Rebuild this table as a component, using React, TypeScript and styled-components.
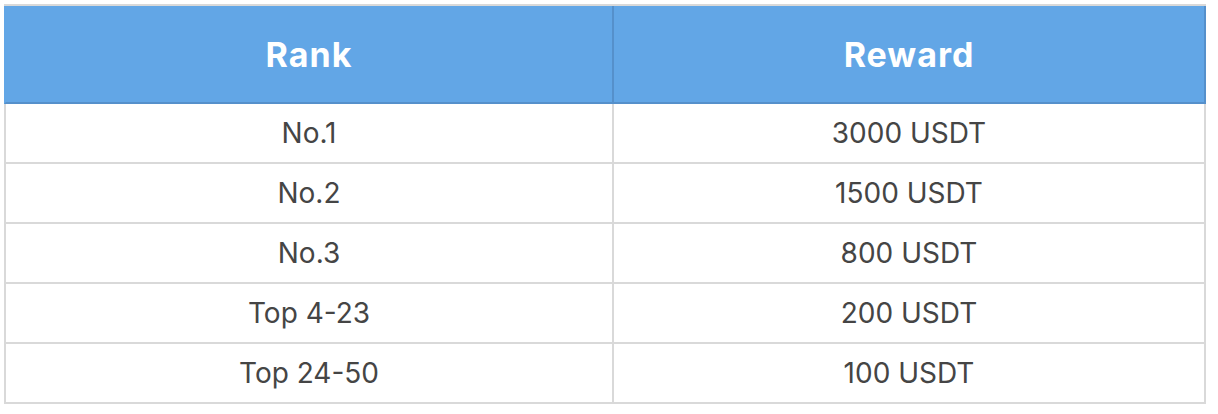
import { FC } from 'react';
import styled, { createGlobalStyle } from 'styled-components';

const GlobalStyle = createGlobalStyle`
  html, body {
    margin: 0;
    padding: 0;
    background: #ffffff;
  }
`;

const Page = styled.div`
  padding: 4px;
  font-family: "Inter", "Liberation Sans", sans-serif;
`;

const Table = styled.div`
  width: 1202px;
  box-sizing: border-box;
  display: flex;
  flex-direction: column;
  border: 2px solid #d9d9d9;
`;

const HeaderRow = styled.div`
  display: grid;
  grid-template-columns: 606px 590px;
  column-gap: 2px;
  margin: 0 -2px;
  border-left: 2px solid #62a6e6;
  border-right: 2px solid #5590cb;
  border-bottom: 2px solid #5590cb;
  background: #5590cb;
`;

const HeadCell = styled.div`
  height: 96px;
  display: flex;
  align-items: center;
  justify-content: center;
  background: #62a6e6;
  color: #ffffff;
  font-size: 34px;
  font-weight: 700;
  letter-spacing: 1px;
`;

const BodyRow = styled.div`
  display: grid;
  grid-template-columns: 606px 590px;
  column-gap: 2px;
  background: #d9d9d9;

  & + & {
    border-top: 2px solid #d9d9d9;
  }
`;

const Cell = styled.div`
  height: 58px;
  display: flex;
  align-items: center;
  justify-content: center;
  background: #ffffff;
  color: #454545;
  font-size: 28px;
`;

const rewards = [
  { rank: 'No.1', reward: '3000 USDT' },
  { rank: 'No.2', reward: '1500 USDT' },
  { rank: 'No.3', reward: '800 USDT' },
  { rank: 'Top 4-23', reward: '200 USDT' },
  { rank: 'Top 24-50', reward: '100 USDT' },
];

const App: FC = () => {
  return (
    <Page>
      <GlobalStyle />
      <Table>
        <HeaderRow>
          <HeadCell>Rank</HeadCell>
          <HeadCell>Reward</HeadCell>
        </HeaderRow>
        {rewards.map((r) => (
          <BodyRow key={r.rank}>
            <Cell>{r.rank}</Cell>
            <Cell>{r.reward}</Cell>
          </BodyRow>
        ))}
      </Table>
    </Page>
  );
};

export default App;
